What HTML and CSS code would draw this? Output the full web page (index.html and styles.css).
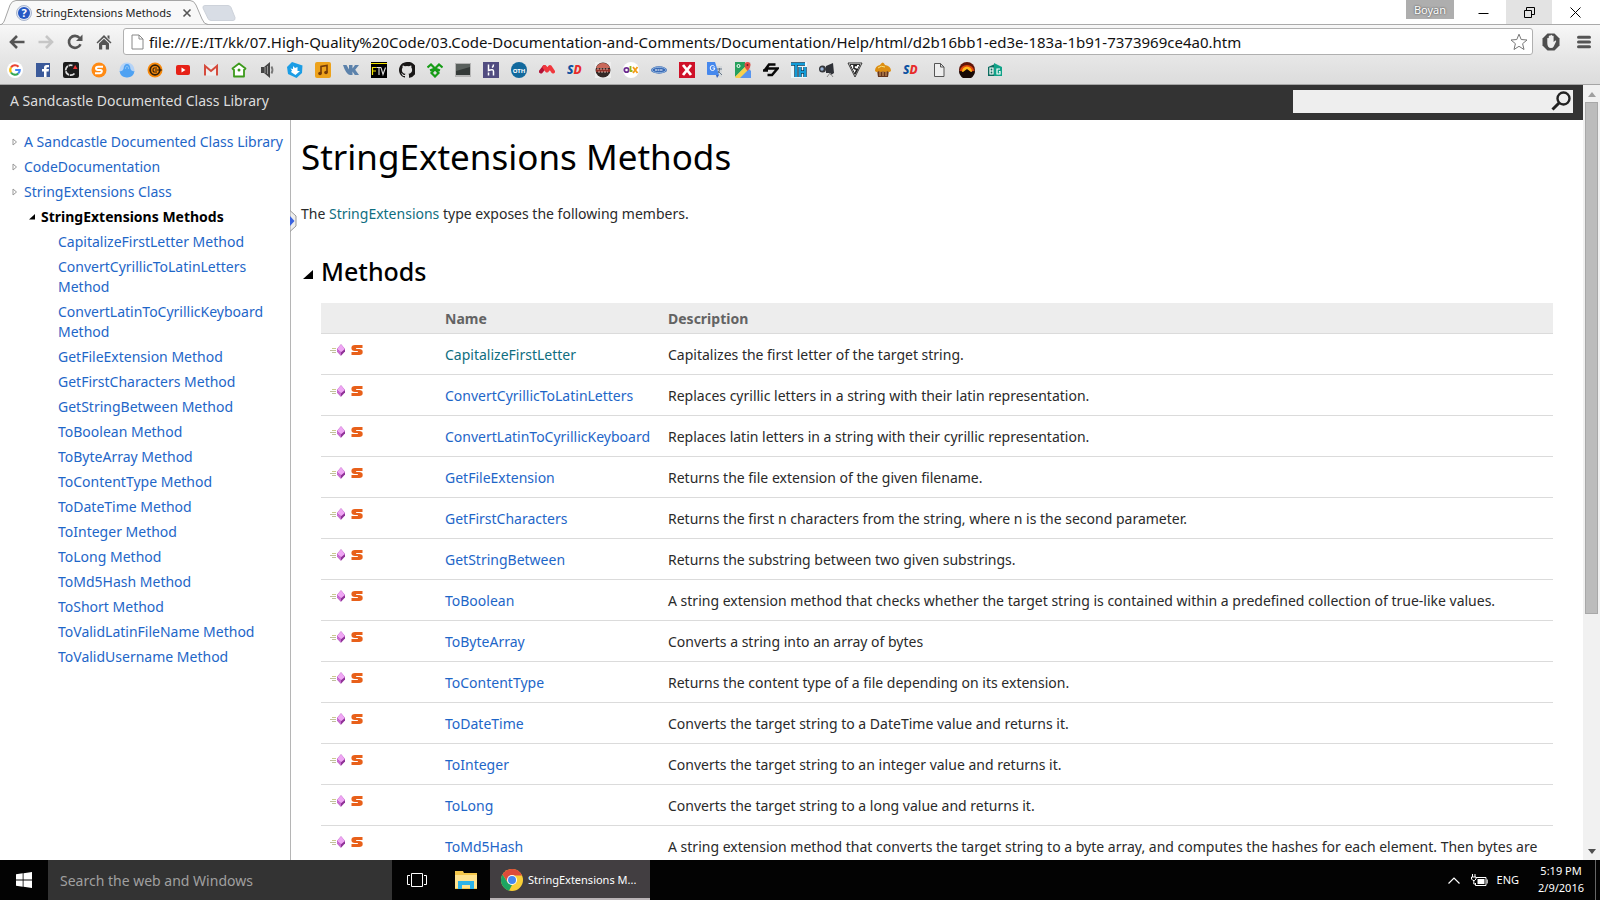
FILE: index.html
```html
<!DOCTYPE html>
<html lang="en">
<head>
<meta charset="utf-8">
<title>StringExtensions Methods</title>
<link rel="stylesheet" href="styles.css">
</head>
<body>
<svg class="defs" aria-hidden="true">
  <symbol id="method" viewBox="0 0 16 12"><path d="M3 4.500h4" stroke="#c9c98c"/><path d="M1 6.500h6M3 8.500h4" stroke="#c0c09c"/><path d="M12 .3l4 4.700v2.500L12 11.800 8 7.500V5z" fill="#8f3297"/><path d="M12 .3L16 5l-4 3.200L8 5z" fill="#efa6f4"/><path d="M8 5l4 3.200v3.600L8 7.500z" fill="#cb6bd4"/></symbol>
  <symbol id="static" viewBox="0 0 12 12"><path d="M11.500 1V4H5.500c-.7 0-.7 1 0 1h2.700c2.300 0 3.500.8 3.500 3S10.500 11 8.200 11H.5V8h6c.8 0 .8-1 0-1H4C1.500 7 .4 6 .4 4S1.500 1 4 1z" fill="#e8601a"/></symbol>
  <symbol id="closed" viewBox="0 0 6 8"><path d="M1 1v6l3.500-3z" fill="#fff" stroke="#999"/></symbol>
  <symbol id="open" viewBox="0 0 10 10"><path d="M10 0v9H0z" fill="#000"/></symbol>
</svg>

<header class="browser">
  <div class="titlebar">
    <div class="tab">
      <svg class="tab-shape" viewBox="0 0 208 25" aria-hidden="true"><path d="M0 25C3 24 4 22 5 19L10 5Q12 .5 16 .5H190Q194 .5 196 5L202 19Q204 24.500 208 24.500V25z" fill="#f8f8f8" stroke="#a5a5a5"/></svg>
      <svg class="tab-icon" viewBox="0 0 16 16" aria-hidden="true"><circle cx="8" cy="8" r="7.500" fill="#dfe6f4" stroke="#a9b5cc"/><circle cx="8" cy="8" r="6" fill="#2558c4"/><text x="8" y="12" text-anchor="middle" font-size="11" font-weight="700" fill="#fff">?</text></svg>
      <span class="tab-title">StringExtensions Methods</span>
      <button class="tab-close" aria-label="Close tab"><svg viewBox="0 0 10 10"><path d="M1.500 1.500l7 7M8.500 1.500l-7 7" stroke="#555" stroke-width="1.600"/></svg></button>
    </div>
    <button class="newtab" aria-label="New tab"><svg viewBox="0 0 34 16"><path d="M3 .5h23q2 0 3 2l4 10q.5 3-2 3H9q-2 0-3-2L1 3Q.5.500 3 .5z" fill="#d8dde5" stroke="#cdd2da"/></svg></button>
    <div class="window-controls">
      <button class="profile">Boyan</button>
      <button class="wbtn" aria-label="Minimize"><svg viewBox="0 0 11 11"><path d="M.5 6.500h10" stroke="#000"/></svg></button>
      <button class="wbtn hover" aria-label="Restore"><svg viewBox="0 0 11 11"><path d="M.5 3.500h7v7h-7zM2.500 3V.5h8v7H8" fill="none" stroke="#000"/></svg></button>
      <button class="wbtn" aria-label="Close"><svg viewBox="0 0 11 11"><path d="M.5.500l10 10M10.500.500l-10 10" stroke="#000"/></svg></button>
    </div>
  </div>

  <div class="toolbar">
    <button class="tool" aria-label="Back"><svg viewBox="0 0 16 16"><path d="M15.500 8H3M8 2L2 8l6 6" fill="none" stroke="#555" stroke-width="2.600"/></svg></button>
    <button class="tool" aria-label="Forward"><svg viewBox="0 0 16 16"><path d="M.5 8H13M8 2l6 6-6 6" fill="none" stroke="#c6c6c6" stroke-width="2.600"/></svg></button>
    <button class="tool" aria-label="Reload"><svg viewBox="0 0 16 16"><path d="M13.500 10.200A6 6 0 1 1 12.600 4" fill="none" stroke="#555" stroke-width="2.600"/><path d="M15.500.500v6.500H9z" fill="#555"/></svg></button>
    <button class="tool" aria-label="Home"><svg viewBox="0 0 16 16"><path d="M8 1l7.500 7.500-1 1L8 3.500 1.500 9.500l-1-1zM11.500 1.500h2v4l-2-2z" fill="#555"/><path d="M3 9.500l5-4.700 5 4.700V15.500H9.800V11H6.200v4.500H3z" fill="#555"/></svg></button>
    <div class="omnibox">
      <svg class="page-icon" viewBox="0 0 13 16" aria-hidden="true"><path d="M1 1h7l4 4v10H1zM8 1v4h4" fill="#fff" stroke="#888"/></svg>
      <input class="url" aria-label="Address" value="file:///E:/IT/kk/07.High-Quality%20Code/03.Code-Documentation-and-Comments/Documentation/Help/html/d2b16bb1-ed3e-183a-1b91-7373969ce4a0.htm">
      <button class="star" aria-label="Bookmark this page"><svg viewBox="0 0 18 18"><path d="M9 1.200l2.200 5.300 5.800.5-4.400 3.700 1.400 5.800L9 13.300l-5 3.200 1.400-5.800L1 7l5.800-.5z" fill="none" stroke="#777" stroke-linejoin="round"/></svg></button>
    </div>
    <button class="tool hand" aria-label="Ad blocker"><svg viewBox="0 0 18 18"><path d="M5.500.500h7l5 5v7l-5 5h-7l-5-5v-7z" fill="#4e4e4e"/><path d="M5.300 10V5.200q.8-1 1.500 0V3q.8-1 1.600 0v-.8q.8-1 1.600 0V3q.8-1 1.600 0v6l1.700-1.600q1.200 0 .8 1l-2.400 5q-.8 1.600-2.700 1.600-3.700 0-3.700-5z" fill="#eee"/></svg></button>
    <button class="tool" aria-label="Menu"><svg viewBox="0 0 16 16"><path d="M2.500 3.300h11M2.500 8h11M2.500 12.700h11" stroke="#555" stroke-width="3" stroke-linecap="round"/></svg></button>
  </div>

  <nav class="bookmarks" aria-label="Bookmarks">
    <a href="#" aria-label="Google"><svg viewBox="0 0 16 16"><circle cx="8" cy="8" r="8" fill="#fff"/><g fill="none" stroke-width="2.200"><path d="M4 5.500A4.700 4.700 0 0 1 11.500 4.800" stroke="#ea4335"/><path d="M4 5.500a4.700 4.700 0 0 0 0 5" stroke="#fbbc05"/><path d="M4 10.500a4.700 4.700 0 0 0 7.200 1" stroke="#34a853"/><path d="M11.200 11.500A4.500 4.500 0 0 0 12.700 8H8.200" stroke="#4285f4"/></g></svg></a>
    <a href="#" aria-label="Facebook"><svg viewBox="0 0 16 16"><path d="M1 1h14v14H1z" fill="#3b5a9a"/><path d="M9 15V9.500H7V7h2V5.500Q9 3 11.500 3H14v2.200h-1.500q-1 0-1 1V7H14l-.4 2.500h-2.100V15z" fill="#fff"/></svg></a>
    <a href="#" aria-label="Circle"><svg viewBox="0 0 16 16"><rect width="16" height="16" rx="2" fill="#1b1b1b"/><path d="M11.500 11.500a5 5 0 1 1-2-8" fill="none" stroke="#ddd" stroke-width="1.800" stroke-dasharray="5 .8"/><path d="M12.200 3l2.300 4h-4.500z" fill="#e33"/></svg></a>
    <a href="#" aria-label="S"><svg viewBox="0 0 16 16"><circle cx="8" cy="8" r="7.500" fill="#ff8a13"/><path d="M12 4.800H7q-2 0-2 1.500T7 8h2.500q1.500 0 1.300 1.500T9 11.200H4" fill="none" stroke="#fff" stroke-width="2"/></svg></a>
    <a href="#" aria-label="Blue"><svg viewBox="0 0 16 16"><circle cx="8" cy="8" r="7.500" fill="#b4d3f7"/><path d="M.5 9Q3 10 4.500 7 5 2 8 2t3.500 5q1.500 3 4 2-1 6.500-7.500 6.500T.5 9z" fill="#4fa2f2"/><path d="M6.500 7q0-3 1.500-3t1.500 3" fill="none" stroke="#87c3fa"/></svg></a>
    <a href="#" aria-label="Orange"><svg viewBox="0 0 16 16"><circle cx="8" cy="8" r="7.500" fill="#f98a0c"/><circle cx="8" cy="8" r="4.800" fill="none" stroke="#332008" stroke-width="1.800"/><path d="M10 6H7q-1 0-1 2t1 2h3M8 8h7" fill="none" stroke="#332008" stroke-width="1.200"/></svg></a>
    <a href="#" aria-label="YouTube"><svg viewBox="0 0 16 16"><rect x="1" y="3" width="14" height="10" rx="2" fill="#e62117"/><path d="M6.500 5.500v5l4-2.500z" fill="#fff"/></svg></a>
    <a href="#" aria-label="Gmail"><svg viewBox="0 0 16 16"><path d="M1 3h14v10.500H1z" fill="#eee"/><path d="M2 13.500V4l6 5 6-5v9.500" fill="none" stroke="#d54b3d" stroke-width="2"/></svg></a>
    <a href="#" aria-label="Home"><svg viewBox="0 0 16 16"><path d="M8 1.500l6.500 5-1.500 1.500v6.500H3V8L1.500 6.500z" fill="#fff" stroke="#3c9a1b" stroke-width="1.800" stroke-linejoin="round"/><circle cx="8" cy="8" r="1.500" fill="#3c9a1b"/></svg></a>
    <a href="#" aria-label="Speaker"><svg viewBox="0 0 16 16"><path d="M2 5h3l6-5v16l-6-5H2z" fill="#444"/><path d="M6 5v6M8.500 4v8" stroke="#999"/><path d="M12.500 4.500q2 3.500 0 7" fill="none" stroke="#777" stroke-width="1.800"/></svg></a>
    <a href="#" aria-label="Download"><svg viewBox="0 0 16 16"><path d="M5 0l10.500 3.500L15 11l-5.500 5L1 12 0 5z" fill="#1b9de5"/><path d="M6 4l2 2 2.500-1v4h2.500l-4.500 4L4 10l1-1.500L3.500 6.500 6 7z" fill="#fff"/></svg></a>
    <a href="#" aria-label="Music"><svg viewBox="0 0 16 16"><rect width="16" height="16" rx="2" fill="#eda21b"/><path d="M6 11.500V4.500l6-1v7" fill="none" stroke="#753b08" stroke-width="1.600"/><circle cx="5" cy="11.500" r="1.800" fill="#753b08"/><circle cx="11" cy="10.500" r="1.800" fill="#753b08"/></svg></a>
    <a href="#" aria-label="VK"><svg viewBox="0 0 16 16"><path d="M0 3h3.500L6 7.500V3h3.500v3.500L12 3h4l-3.800 4.700L16 13h-4.200L9.500 9.500V13H7Q3 12.500 0 3z" fill="#5c82ab"/></svg></a>
    <a href="#" aria-label="FTV"><svg viewBox="0 0 16 16"><path d="M0 0h16v16H0z" fill="#000"/><path d="M0 1.500h16" stroke="#f5e400"/><path d="M1.500 13V5.500h4M1.500 9H5" fill="none" stroke="#f5e400" stroke-width="1.200"/><path d="M5.500 5.500H10M8 5.500V13M10 5.500l2 7 2.500-7" fill="none" stroke="#ddd" stroke-width="1.100"/></svg></a>
    <a href="#" aria-label="GitHub"><svg viewBox="0 0 16 16"><path d="M8 0C3.600 0 0 3.600 0 8c0 3.500 2.300 6.500 5.500 7.600.4.100.5-.2.500-.4V13.900c-2.200.5-2.700-1-2.700-1-.4-.9-.9-1.100-.9-1.100-.7-.5.1-.5.100-.5.800.1 1.200.8 1.200.8.700 1.200 1.900.9 2.300.7.100-.5.300-.9.500-1.100-1.800-.2-3.600-.9-3.600-4 0-.9.300-1.600.8-2.100-.1-.2-.4-1 .1-2.100 0 0 .7-.2 2.200.8a7.600 7.600 0 0 1 4 0c1.500-1 2.200-.8 2.200-.8.400 1.100.2 1.900.1 2.100.5.600.8 1.300.8 2.100 0 3.100-1.900 3.800-3.700 4 .3.300.6.800.6 1.500v2.200c0 .2.100.5.600.4A8 8 0 0 0 8 0z" fill="#191717"/></svg></a>
    <a href="#" aria-label="Green"><svg viewBox="0 0 16 16"><path d="M.5 5.500L4 2.500l4 4 4-4 3.500 3M3 8.500L8 6.500l5 2M8 7l3.500 4L8 14.500 4.500 11z" fill="none" stroke="#169c16" stroke-width="2.200"/></svg></a>
    <a href="#" aria-label="Screen"><svg viewBox="0 0 16 16"><path d="M0 1h16v14H0z" fill="#b5b5b5"/><path d="M1 2h14v11H1z" fill="#343a38"/><path d="M1 2h14v3L1 9z" fill="#59605d"/></svg></a>
    <a href="#" aria-label="Heroku"><svg viewBox="0 0 16 16"><path d="M0 0h16v16H0z" fill="#514c80"/><path d="M5.500 2.500v6q5-2 5 1v4M10.500 2.500q0 2-1.500 3M5.500 10.500v3" fill="none" stroke="#fff" stroke-width="1.500"/></svg></a>
    <a href="#" aria-label="OTH"><svg viewBox="0 0 16 16"><circle cx="8" cy="8" r="8" fill="#11699d"/><text x="8" y="10.500" text-anchor="middle" font-size="6" font-weight="700" fill="#fff">OTH</text></svg></a>
    <a href="#" aria-label="Red"><svg viewBox="0 0 16 16"><path d="M2 9.500L5.500 5" stroke="#b31236" stroke-width="4" stroke-linecap="round"/><path d="M5.500 5L8 8.500 11 5l3 4.500" fill="none" stroke="#f0373d" stroke-width="4" stroke-linecap="round" stroke-linejoin="round"/></svg></a>
    <a href="#" aria-label="SD"><svg viewBox="0 0 16 16"><text x="0" y="12" font-size="12" font-weight="800" font-style="italic" fill="#0b51a1">S<tspan fill="#e72c2b">D</tspan></text></svg></a>
    <a href="#" aria-label="Sport"><svg viewBox="0 0 16 16"><path d="M0 0h16v16H0z" fill="#eee"/><circle cx="8" cy="8" r="7.500" fill="#332826"/><path d="M1 6q2-5 7-5t7 5z" fill="#c9685a"/><path d="M1 7h14v3H1z" fill="#8d3028"/><path d="M2 7h12M3 10h10" stroke="#d8b3aa" stroke-dasharray="2 1"/></svg></a>
    <a href="#" aria-label="OLX"><svg viewBox="0 0 16 16"><circle cx="8" cy="8" r="8" fill="#fff"/><circle cx="3.500" cy="8" r="2.200" fill="none" stroke="#6d2d91" stroke-width="1.800"/><path d="M7.500 4v5h2" fill="none" stroke="#94b51d" stroke-width="1.800"/><path d="M10 5l4.500 6M14.500 5L10 11" stroke="#f49b17" stroke-width="1.800"/></svg></a>
    <a href="#" aria-label="Oval"><svg viewBox="0 0 16 16"><ellipse cx="8" cy="8" rx="8" ry="3.700" fill="#3869b5"/><ellipse cx="8" cy="8" rx="7" ry="2.700" fill="none" stroke="#8fb3de"/><path d="M4 8h8" stroke="#fff" stroke-dasharray="2 .5"/></svg></a>
    <a href="#" aria-label="X"><svg viewBox="0 0 16 16"><path d="M0 0h16v16H0z" fill="#cf1128"/><path d="M4 3l8 10M12 3L4 13" stroke="#fff" stroke-width="2.800"/></svg></a>
    <a href="#" aria-label="Translate"><svg viewBox="0 0 16 16"><path d="M7 4h8v11H9z" fill="#d5d8db"/><path d="M0 0h8l4 13H1q-1 0-1-1z" fill="#4688ed"/><path d="M7.500 4.500q-1-1-2-1-2.300 0-2.300 2.500t2.300 2.500 2.300-2.500H5.500" fill="none" stroke="#fff"/><path d="M9 13h3l-2 3z" fill="#3564c0"/><path d="M10 7h5M12.500 6v1q0 3-1.500 4M11 9l4 4" stroke="#678" fill="none"/></svg></a>
    <a href="#" aria-label="Maps"><svg viewBox="0 0 16 16"><path d="M0 0h16v16H0z" fill="#dbdbdb"/><path d="M0 0h10v5L0 15z" fill="#26a05c"/><path d="M1 16L12 5l4 4v7z" fill="#5895ee"/><path d="M0 15L11 4l3 3-9 9H1z" fill="#f7d04d"/><path d="M12.500 0q3 0 3 3T12.500 9Q9.500 6 9.500 3t3-3z" fill="#e34d42"/><circle cx="12.500" cy="3" r="1" fill="#731d19"/><circle cx="3.500" cy="4" r="1.500" fill="none" stroke="#fff"/></svg></a>
    <a href="#" aria-label="Bolt"><svg viewBox="0 0 16 16"><path d="M12.500 2.500H6L3 6.500h11.500L9 13H4.500M0 8.500h5" fill="none" stroke="#080808" stroke-width="2.500"/></svg></a>
    <a href="#" aria-label="TH"><svg viewBox="0 0 16 16"><path d="M0 0h16v16H0z" fill="#e8f6fb"/><path d="M0 2h14M5 2v13M9 5v10M14 5v10M9 10h5" stroke="#073c5c" stroke-width="3.400"/><path d="M0 2h14M5 2v13M9 5v10M14 5v10M9 10h5" stroke="#119bd7" stroke-width="2"/></svg></a>
    <a href="#" aria-label="Camera"><svg viewBox="0 0 16 16"><circle cx="3.500" cy="7" r="3.500" fill="#35373c"/><circle cx="3" cy="7" r="1.700" fill="#9cb6d9"/><path d="M7 4l7-3 1 10-3 2-2-2H7z" fill="#2f3137"/><path d="M11 11l-3 4M11 11l3 4" stroke="#888"/></svg></a>
    <a href="#" aria-label="Triangle"><svg viewBox="0 0 16 16"><path d="M1 1h14L8 15zM3 2.500h10L8 12.500z" fill="#fff" stroke="#333"/><path d="M10 3.500H7v3l3 1-2 4" fill="none" stroke="#222" stroke-width="1.600"/></svg></a>
    <a href="#" aria-label="Cake"><svg viewBox="0 0 16 16"><path d="M2 8h12l-1 7H3z" fill="#65351d"/><path d="M5 9v5M8 9v5M11 9v5" stroke="#dba566"/><path d="M0 9q0-5 5-6 3-5 5 0 6 1 6 6-2 2-4 0-2 2-4 0-2 2-4 0-2 2-4 0z" fill="#dd8e12"/><path d="M3 6q3-3 7-1" stroke="#fae078" fill="none"/></svg></a>
    <a href="#" aria-label="SD"><svg viewBox="0 0 16 16"><text x="0" y="12" font-size="12" font-weight="800" font-style="italic" fill="#0b51a1">S<tspan fill="#e72c2b">D</tspan></text></svg></a>
    <a href="#" aria-label="Page"><svg viewBox="0 0 16 16"><path d="M3.500 1.500h6l3.500 3.500v9.500H3.500zM9.500 1.500V5H13" fill="#eee" stroke="#555"/></svg></a>
    <a href="#" aria-label="Sunset"><svg viewBox="0 0 16 16"><circle cx="8" cy="8" r="8" fill="#611509"/><path d="M1 9a7 6 0 0 1 14 0z" fill="#e2480b"/><path d="M3 10a5 5.500 0 0 1 10 0z" fill="#ffb81b"/><path d="M0 9l4 1 4-3 4 3 4-1a8 8 0 0 1-16 0z" fill="#180905"/></svg></a>
    <a href="#" aria-label="BG"><svg viewBox="0 0 16 16"><path d="M1 5l7-3v12H1z" fill="#0c6c5f"/><path d="M7 1l8 4v9H7z" fill="#10a288"/><path d="M3 6v6h3V6zM3 9h3M13 7h-3v5h3V9.500h-1" fill="none" stroke="#fff" stroke-width="1.200"/></svg></a>
  </nav>
</header>

<div class="viewport">
  <div class="page">
    <header class="docbar">
      <span>A Sandcastle Documented Class Library</span>
      <form class="search">
        <input type="text" aria-label="Search">
        <button type="button" aria-label="Search"><svg viewBox="0 0 20 20"><circle cx="12.500" cy="7.500" r="6" fill="none" stroke="#222" stroke-width="2.400"/><path d="M8 12l-6.500 6.500" stroke="#222" stroke-width="3"/></svg></button>
      </form>
    </header>
    <div class="columns">
      <nav class="toc" aria-label="Contents">
        <ul>
          <li class="l0"><svg><use href="#closed"/></svg><a href="#">A Sandcastle Documented Class Library</a></li>
          <li class="l0"><svg><use href="#closed"/></svg><a href="#">CodeDocumentation</a></li>
          <li class="l0"><svg><use href="#closed"/></svg><a href="#">StringExtensions Class</a></li>
          <li class="l1"><svg><use href="#open"/></svg><a href="#">StringExtensions Methods</a></li>
          <li class="l2"><a href="#">CapitalizeFirstLetter Method</a></li>
          <li class="l2"><a href="#">ConvertCyrillicToLatinLetters Method</a></li>
          <li class="l2"><a href="#">ConvertLatinToCyrillicKeyboard Method</a></li>
          <li class="l2"><a href="#">GetFileExtension Method</a></li>
          <li class="l2"><a href="#">GetFirstCharacters Method</a></li>
          <li class="l2"><a href="#">GetStringBetween Method</a></li>
          <li class="l2"><a href="#">ToBoolean Method</a></li>
          <li class="l2"><a href="#">ToByteArray Method</a></li>
          <li class="l2"><a href="#">ToContentType Method</a></li>
          <li class="l2"><a href="#">ToDateTime Method</a></li>
          <li class="l2"><a href="#">ToInteger Method</a></li>
          <li class="l2"><a href="#">ToLong Method</a></li>
          <li class="l2"><a href="#">ToMd5Hash Method</a></li>
          <li class="l2"><a href="#">ToShort Method</a></li>
          <li class="l2"><a href="#">ToValidLatinFileName Method</a></li>
          <li class="l2"><a href="#">ToValidUsername Method</a></li>
        </ul>
        <button class="resize" aria-label="Resize contents"><svg viewBox="0 0 7 22"><path d="M0 .5l6 5.500v10L0 21.500z" fill="#eee" stroke="#999"/><path d="M0 6l4.500 5L0 16z" fill="#3a63e0"/></svg></button>
      </nav>
      <main class="topic">
        <h1>StringExtensions Methods</h1>
        <p>The <a class="visited" href="#">StringExtensions</a> type exposes the following members.</p>
        <h2><svg><use href="#open"/></svg>Methods</h2>
        <table>
          <thead><tr><th class="icons" aria-label="Type"></th><th class="name">Name</th><th>Description</th></tr></thead>
          <tbody>
            <tr><td class="icons"><svg class="m"><use href="#method"/></svg><svg class="s"><use href="#static"/></svg></td><td><a class="visited" href="#">CapitalizeFirstLetter</a></td><td>Capitalizes the first letter of the target string.</td></tr>
            <tr><td class="icons"><svg class="m"><use href="#method"/></svg><svg class="s"><use href="#static"/></svg></td><td><a href="#">ConvertCyrillicToLatinLetters</a></td><td>Replaces cyrillic letters in a string with their latin representation.</td></tr>
            <tr><td class="icons"><svg class="m"><use href="#method"/></svg><svg class="s"><use href="#static"/></svg></td><td><a href="#">ConvertLatinToCyrillicKeyboard</a></td><td>Replaces latin letters in a string with their cyrillic representation.</td></tr>
            <tr><td class="icons"><svg class="m"><use href="#method"/></svg><svg class="s"><use href="#static"/></svg></td><td><a href="#">GetFileExtension</a></td><td>Returns the file extension of the given filename.</td></tr>
            <tr><td class="icons"><svg class="m"><use href="#method"/></svg><svg class="s"><use href="#static"/></svg></td><td><a href="#">GetFirstCharacters</a></td><td>Returns the first n characters from the string, where n is the second parameter.</td></tr>
            <tr><td class="icons"><svg class="m"><use href="#method"/></svg><svg class="s"><use href="#static"/></svg></td><td><a href="#">GetStringBetween</a></td><td>Returns the substring between two given substrings.</td></tr>
            <tr><td class="icons"><svg class="m"><use href="#method"/></svg><svg class="s"><use href="#static"/></svg></td><td><a href="#">ToBoolean</a></td><td>A string extension method that checks whether the target string is contained within a predefined collection of true-like values.</td></tr>
            <tr><td class="icons"><svg class="m"><use href="#method"/></svg><svg class="s"><use href="#static"/></svg></td><td><a href="#">ToByteArray</a></td><td>Converts a string into an array of bytes</td></tr>
            <tr><td class="icons"><svg class="m"><use href="#method"/></svg><svg class="s"><use href="#static"/></svg></td><td><a href="#">ToContentType</a></td><td>Returns the content type of a file depending on its extension.</td></tr>
            <tr><td class="icons"><svg class="m"><use href="#method"/></svg><svg class="s"><use href="#static"/></svg></td><td><a href="#">ToDateTime</a></td><td>Converts the target string to a DateTime value and returns it.</td></tr>
            <tr><td class="icons"><svg class="m"><use href="#method"/></svg><svg class="s"><use href="#static"/></svg></td><td><a href="#">ToInteger</a></td><td>Converts the target string to an integer value and returns it.</td></tr>
            <tr><td class="icons"><svg class="m"><use href="#method"/></svg><svg class="s"><use href="#static"/></svg></td><td><a href="#">ToLong</a></td><td>Converts the target string to a long value and returns it.</td></tr>
            <tr><td class="icons"><svg class="m"><use href="#method"/></svg><svg class="s"><use href="#static"/></svg></td><td><a href="#">ToMd5Hash</a></td><td>A string extension method that converts the target string to a byte array, and computes the hashes for each element. Then bytes are</td></tr>
          </tbody>
        </table>
      </main>
    </div>
  </div>
  <div class="scrollbar" aria-hidden="true">
    <svg viewBox="0 0 8 5"><path d="M4 0l4 5H0z" fill="#a0a0a0"/></svg>
    <div class="track"><div class="thumb"></div></div>
    <svg viewBox="0 0 8 5"><path d="M0 0h8L4 5z" fill="#505050"/></svg>
  </div>
</div>

<footer class="taskbar">
  <button class="start" aria-label="Start"><svg viewBox="0 0 16 16"><path d="M0 2.300L6.700 1.300v6.300H0zM7.500 1.200L16 0v7.600H7.500zM0 8.400h6.700v6.300L0 13.700zM7.500 8.400H16V16l-8.500-1.200z" fill="#fff"/></svg></button>
  <input class="websearch" type="text" aria-label="Search the web and Windows" placeholder="Search the web and Windows">
  <button class="task" aria-label="Task View"><svg class="view" viewBox="0 0 20 16"><path d="M4.500 1.500h11v13h-11zM3 3.500H.5v9H3M17 3.500h2.500v9H17" fill="none" stroke="#fff"/></svg></button>
  <button class="task" aria-label="File Explorer"><svg class="explorer" viewBox="0 0 22 20"><path d="M0 1h8l1 2h13v16H0z" fill="#f5c84c"/><path d="M0 5h22v13H0z" fill="#ffe390"/><path d="M3 11h16v8h-4v-4H7v4H3z" fill="#2db3e8"/></svg></button>
  <button class="app"><svg viewBox="0 0 24 24" aria-hidden="true"><circle cx="12" cy="12" r="11" fill="#f9cf38"/><path d="M2.500 6.500A11 11 0 0 1 22 7.500H12L7.500 14z" fill="#dd4b3a"/><path d="M2.500 6.500L8 15l4 2-3 5.700A11 11 0 0 1 2.500 6.500z" fill="#1da462"/><circle cx="12" cy="12" r="5" fill="#fff"/><circle cx="12" cy="12" r="4" fill="#4587ee"/></svg><span>StringExtensions M...</span></button>
  <div class="tray">
    <button aria-label="Show hidden icons"><svg class="chevron" viewBox="0 0 12 7"><path d="M.5 6.500L6 1l5.500 5.500" fill="none" stroke="#fff" stroke-width="1.200"/></svg></button>
    <svg class="battery" viewBox="0 0 17 13" aria-hidden="true"><path d="M5 3.500h10v8H4.500V9M16.200 5.500v4" fill="none" stroke="#fff"/><path d="M6.500 5h7v5h-7z" fill="#fff"/><path d="M1.500 0v3M4 0v3M.5 3H5v2L3.500 6.500H2L.5 5zM2.800 6v4h2" fill="none" stroke="#fff"/></svg>
    <span class="lang">ENG</span>
    <div class="clock"><span>5:19 PM</span><span>2/9/2016</span></div>
    <div class="desktop-edge"></div>
  </div>
</footer>
</body>
</html>
```
FILE: styles.css
```css
* { box-sizing: border-box; }
body {
  margin: 0;
  height: 100vh;
  display: flex;
  flex-direction: column;
  overflow: hidden;
  background: #fff;
  color: #2a2a2a;
  font: 14px/20px "Noto Sans", "Open Sans", sans-serif;
}
button { padding: 0; border: 0; background: none; font: inherit; color: inherit; }
input { border: 0; padding: 0; font: inherit; min-width: 0; outline: 0; }
svg { display: block; flex: none; }
a { color: #1e66c8; text-decoration: none; }
a.visited { color: #0f6e80; }
.defs { position: absolute; width: 0; height: 0; }

/* Browser chrome */
.browser { flex: none; }
.titlebar { display: flex; height: 24px; }
.tab { position: relative; display: flex; align-items: center; width: 200px; padding: 2px 8px 0 16px; font-size: 11px; color: #222; }
.tab-shape { position: absolute; left: 0; top: 0; width: 208px; height: 25px; }
.tab-icon { position: relative; width: 16px; height: 16px; margin-right: 4px; }
.tab-title { position: relative; flex: 1; white-space: nowrap; }
.tab-close { position: relative; }
.tab-close svg { width: 10px; height: 10px; }
.newtab { align-self: center; margin: 2px 0 0 2px; }
.newtab svg { width: 34px; height: 16px; }
.window-controls { display: flex; margin-left: auto; padding-right: 2px; }
.profile { width: 48px; height: 19px; margin-right: 6px; background: #aeaeae; color: #fff; font-size: 11px; line-height: 18px; text-shadow: 0 0 2px #333; }
.wbtn { display: flex; align-items: center; justify-content: center; width: 46px; height: 24px; }
.wbtn.hover { background: #e3e3e3; }
.wbtn svg { width: 11px; height: 11px; }

.toolbar { display: flex; align-items: center; height: 34px; padding: 0 2px; border-top: 1px solid #aaa; background: linear-gradient(#f7f7f7, #e6e6e6); }
.tool { display: flex; justify-content: center; width: 29px; }
.tool svg { width: 16px; height: 16px; }
.tool.hand { width: 36px; }
.tool.hand svg { width: 18px; height: 18px; }
.omnibox { flex: 1; display: flex; align-items: center; height: 27px; margin-left: 5px; padding: 0 4px 0 7px; border: 1px solid #b0b0b0; border-radius: 3px; background: #fff; }
.page-icon { width: 13px; height: 16px; margin-right: 5px; }
.url { flex: 1; font-size: 15px; color: #111; }
.star svg { width: 18px; height: 18px; }
.bookmarks { display: flex; align-items: flex-start; gap: 12px; height: 27px; padding: 4px 7px; border-bottom: 1px solid #a5a5a5; background: linear-gradient(#e6e6e6, #dcdcdc); }
.bookmarks svg { width: 16px; height: 16px; }

/* Document */
.viewport { flex: 1; display: flex; min-height: 0; }
.page { flex: 1; display: flex; flex-direction: column; min-width: 0; overflow: hidden; }
.docbar { flex: none; display: flex; align-items: center; justify-content: space-between; height: 35px; padding: 0 10px; background: #333; color: #ddd; }
.docbar > span { padding-bottom: 4px; }
.search { display: flex; align-items: center; width: 280px; height: 23px; margin-bottom: 3px; background: #eee; }
.search input { flex: 1; background: transparent; }
.search button { margin-right: 2px; }
.search svg { width: 20px; height: 20px; }
.columns { flex: 1; display: flex; min-height: 0; }
.toc { position: relative; flex: none; width: 291px; padding: 12px 0 0; border-right: 1px solid #b5b5b5; }
.toc ul { display: flex; flex-direction: column; gap: 5px; margin: 0; padding: 0; list-style: none; }
.toc li { display: flex; align-items: flex-start; }
.l0 { padding-left: 12px; white-space: nowrap; }
.l0 svg { width: 6px; height: 8px; margin: 6px 6px 0 0; }
.l1 { padding-left: 29px; font-weight: 700; white-space: nowrap; }
.l1 a { color: #000; }
.l1 svg { width: 6px; height: 6px; margin: 7px 6px 0 0; }
.l2 { padding: 0 16px 0 58px; }
.resize { position: absolute; left: 290px; top: 90px; }
.resize svg { width: 7px; height: 22px; }
.topic { flex: 1; min-width: 0; padding: 12px 30px 0 10px; }
h1 { margin: 0 0 22px; font-size: 35px; line-height: 50px; font-weight: 400; color: #000; }
p { margin: 0 0 29px; }
h2 { display: flex; align-items: center; margin: 0 0 14px; font-size: 25px; line-height: 36px; font-weight: 500; color: #000; }
h2 svg { width: 10px; height: 10px; margin: 8px 8px 0 2px; }
table { width: calc(100% - 20px); margin-left: 20px; border-collapse: collapse; }
th { height: 30px; padding: 2px 8px 0; background: #ededed; border-bottom: 1px solid #dbdbdb; color: #636363; text-align: left; }
td { height: 41px; padding: 2px 8px 0; border-bottom: 1px solid #dbdbdb; white-space: nowrap; }
th.icons { width: 116px; }
th.name { width: 223px; }
td.icons { padding-bottom: 12px; }
td.icons svg { display: inline-block; vertical-align: middle; height: 12px; }
.m { width: 16px; margin-right: 6px; }
.s { width: 12px; }

.scrollbar { flex: none; display: flex; flex-direction: column; align-items: center; width: 17px; padding: 7px 0 6px; background: #f1f1f1; }
.scrollbar svg { width: 8px; height: 5px; }
.track { flex: 1; width: 13px; padding: 5px 0; }
.thumb { height: 69%; border: 1px solid #a8a8a8; background: #bcbcbc; }

/* Taskbar */
.taskbar { flex: none; display: flex; height: 40px; background: #030303; color: #fff; font-size: 11px; }
.start { display: flex; align-items: center; justify-content: center; width: 48px; }
.start svg { width: 16px; height: 16px; }
.websearch { width: 344px; padding: 2px 12px 0; background: #333; color: #fff; font-size: 14px; }
.websearch::placeholder { color: #a0a0a0; opacity: 1; }
.task { display: flex; align-items: center; justify-content: center; width: 49px; }
.view { width: 20px; height: 16px; }
.explorer { width: 22px; height: 20px; }
.app { display: flex; align-items: center; gap: 4px; width: 160px; padding: 2px 8px 0 10px; border-bottom: 2px solid #b9b3b6; background: #423e41; white-space: nowrap; }
.app svg { width: 24px; height: 24px; }
.tray { display: flex; align-items: center; margin-left: auto; }
.chevron { width: 12px; height: 7px; margin-right: 11px; }
.battery { width: 17px; height: 13px; margin-right: 9px; }
.lang { margin-right: 19px; }
.clock { display: flex; flex-direction: column; align-items: center; line-height: 17px; margin-right: 11px; padding-bottom: 2px; }
.desktop-edge { align-self: stretch; width: 5px; border-left: 1px solid #666; }
```
